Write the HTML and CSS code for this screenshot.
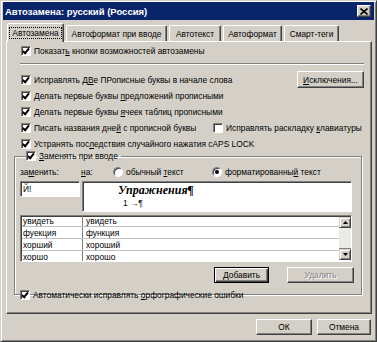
FILE: index.html
```html
<!doctype html>
<html lang="ru">
<head>
  <meta charset="UTF-8">
  <title>Автозамена: русский (Россия)</title>
  <link rel="stylesheet" href="styles.css">
</head>
<body>
  <div class="window">
    <div class="titlebar">
      <span class="title">Автозамена: русский (Россия)</span>
      <span class="close">
        <svg width="8" height="7" viewBox="0 0 8 7"><path d="M0.5 0.5 L7.5 6.5 M7.5 0.5 L0.5 6.5" stroke="#000" stroke-width="1.6"/></svg>
      </span>
    </div>

    <div class="tabs">
      <div class="tab active"><span class="focus">Автозамена</span></div>
      <div class="tab t2">Автоформат при вводе</div>
      <div class="tab t3">Автотекст</div>
      <div class="tab t4">Автоформат</div>
      <div class="tab t5">Смарт-теги</div>
    </div>

    <div class="panel">
      <div class="row first"><span class="cb on"></span><span>Показат<u>ь</u> кнопки возможностей автозамены</span></div>
      <div class="sep"></div>

      <div class="row tall">
        <span class="cb on"></span><span>Исправлять Д<u>В</u>е ПРописные буквы в начале слова</span>
        <span class="btn except"><span><u>И</u>сключения...</span></span>
      </div>
      <div class="row"><span class="cb on"></span><span>Делать первые буквы <u>п</u>редложений прописными</span></div>
      <div class="row"><span class="cb on"></span><span>Делать первые буквы <u>я</u>чеек таблиц прописными</span></div>
      <div class="row">
        <span class="half"><span class="cb on"></span><span>Писать названия дне<u>й</u> с прописной буквы</span></span>
        <span class="cb"></span><span>Исправлять раскладку <u>к</u>лавиатуры</span>
      </div>
      <div class="row"><span class="cb on"></span><span>Устранять пос<u>л</u>едствия случайного нажатия cAPS LOCK</span></div>

      <fieldset class="group">
        <legend><span class="cb on"></span><span><u>З</u>аменять при вводе</span></legend>

        <div class="labels">
          <span class="lab-from">за<u>м</u>енить:</span>
          <span class="lab-to"><u>н</u>а:</span>
          <span class="radio"></span><span class="lab-plain">обычный <u>т</u>екст</span>
          <span class="radio on"></span><span>форматированны<u>й</u> текст</span>
        </div>

        <div class="inputs">
          <div class="field from">Й!</div>
          <div class="field to">
            <div class="rich">Упражнения¶</div>
            <div class="rich-small">1 →¶</div>
          </div>
        </div>

        <div class="list">
          <div class="rows">
            <div class="item"><span class="c1">увидеть</span><span class="c2">увидеть</span></div>
            <div class="item"><span class="c1">фуекция</span><span class="c2">функция</span></div>
            <div class="item"><span class="c1">хорший</span><span class="c2">хороший</span></div>
            <div class="item"><span class="c1">хоршо</span><span class="c2">хорошо</span></div>
          </div>
          <div class="scroll">
            <span class="arrow">
              <svg width="5" height="3" viewBox="0 0 5 3"><path d="M2.5 0 L5 3 L0 3 Z" fill="#000"/></svg>
            </span>
            <span class="track"></span>
            <span class="arrow">
              <svg width="5" height="3" viewBox="0 0 5 3"><path d="M0 0 L5 0 L2.5 3 Z" fill="#000"/></svg>
            </span>
          </div>
        </div>

        <div class="actions">
          <span class="btn default"><span><u>Д</u>обавить</span></span>
          <span class="btn disabled">Удалить</span>
        </div>

        <div class="row last"><span class="cb on"></span><span>Автоматически исправлять <u>о</u>рфографические ошибки</span></div>
      </fieldset>
    </div>

    <div class="footer">
      <span class="btn ok">ОК</span>
      <span class="btn cancel">Отмена</span>
    </div>
  </div>
</body>
</html>
```

FILE: styles.css
```css
*{
  box-sizing: border-box;
}
body{
  margin: 0;
  width: 377px;
  height: 342px;
  font-family: "Liberation Sans", Arial, sans-serif;
  font-size: 8.4px;
  color: #000;
  background: #d4d0c8;
  overflow: hidden;
}
u{
  text-decoration: underline;
  text-underline-offset: 1px;
}

/* окно */
.window{
  width: 377px;
  height: 342px;
  background: #d4d0c8;
  border: 1px solid;
  border-color: #d4d0c8 #404040 #404040 #d4d0c8;
  box-shadow: inset 1px 1px #fff, inset -1px -1px #808080;
  padding: 1px 2px 0 2px;
  display: flex;
  flex-direction: column;
}
.titlebar{
  height: 18px;
  background: #0a246a;
  display: flex;
  align-items: center;
  justify-content: space-between;
  padding: 0 3px 0 2px;
}
.title{
  color: #fff;
  font-weight: bold;
  font-size: 9.5px;
}
.close{
  width: 14px;
  height: 12px;
  background: #d4d0c8;
  border: 1px solid;
  border-color: #fff #404040 #404040 #fff;
  box-shadow: inset -1px -1px #808080;
  display: flex;
  align-items: center;
  justify-content: center;
}

/* вкладки */
.tabs{
  display: flex;
  height: 19px;
  margin-top: 2px;
  padding-left: 4px;
  align-items: flex-end;
  position: relative;
  z-index: 1;
}
.tab{
  height: 16px;
  flex: none;
  border: 1px solid;
  border-bottom: none;
  border-color: #fff #404040 transparent #fff;
  box-shadow: inset -1px 0 #808080;
  border-radius: 2px 2px 0 0;
  padding: 0 4px;
  display: flex;
  align-items: center;
  justify-content: center;
  margin-right: 2px;
  white-space: nowrap;
}
.tab.active{
  width: 57px;
  height: 19px;
  margin-bottom: -1px;
  background: #d4d0c8;
  padding: 3px 2px 0 2px;
  align-items: flex-start;
}
.focus{
  border: 1px dotted #000;
  padding: 0 2px;
  line-height: 10px;
}
.t2{ width: 101px; }
.t3{ width: 52px; }
.t4{ width: 59px; }
.t5{ width: 55px; }

/* панель */
.panel{
  margin: 0 2px 0 3px;
  height: 273px;
  border: 1px solid;
  border-color: #fff #404040 #404040 #fff;
  box-shadow: inset -1px -1px #808080;
  padding: 1px 7px 0 14px;
}
.row{
  height: 16px;
  display: flex;
  align-items: center;
  white-space: nowrap;
}
.row.first{
  height: 15px;
}
.row.tall{
  height: 19px;
  margin-bottom: -1px;
}
.half{
  width: 192px;
  display: flex;
  align-items: center;
  flex: none;
}
.sep{
  height: 2px;
  margin: 5px 0 5px -1px;
  border-top: 1px solid #808080;
  border-bottom: 1px solid #fff;
}

/* флажки */
.cb{
  width: 10px;
  height: 10px;
  flex: none;
  background: #fff;
  border: 1px solid;
  border-color: #808080 #fff #fff #808080;
  box-shadow: inset 1px 1px #404040;
  margin-right: 3px;
  position: relative;
}
.cb.on::after{
  content: "";
  position: absolute;
  left: 2px;
  top: 0px;
  width: 2px;
  height: 5px;
  border: solid #000;
  border-width: 0 2px 2px 0;
  transform: rotate(40deg);
}
.radio{
  width: 10px;
  height: 10px;
  border-radius: 50%;
  background: #fff;
  border: 1px solid;
  border-color: #808080 #fff #fff #808080;
  box-shadow: inset 1px 1px #404040;
  margin-right: 3px;
  position: relative;
  flex: none;
}
.radio.on::after{
  content: "";
  position: absolute;
  left: 2px;
  top: 2px;
  width: 4px;
  height: 4px;
  border-radius: 50%;
  background: #000;
}

/* кнопки */
.btn{
  height: 16px;
  flex: none;
  display: flex;
  align-items: center;
  justify-content: center;
  background: #d4d0c8;
  border: 1px solid;
  border-color: #fff #404040 #404040 #fff;
  box-shadow: inset -1px -1px #808080;
  white-space: nowrap;
}
.except{
  margin-left: auto;
  width: 67px;
  height: 17px;
}
.btn.default{
  width: 55px;
  border: 1px solid #000;
  box-shadow: inset 1px 1px #fff, inset -1px -1px #404040, inset -2px -2px #808080;
}
.btn.disabled{
  width: 67px;
  color: #808080;
  text-shadow: 1px 1px #fff;
  margin-left: 18px;
}

/* группа */
.group{
  margin: -3px 0 0 -7px;
  padding: 0 7px 0 5px;
  width: 348px;
  height: 146px;
  border: 1px solid #808080;
  box-shadow: 1px 1px #fff, inset 1px 1px #fff;
}
.group legend{
  padding: 0 3px 0 0;
  margin-left: 6px;
  display: flex;
  align-items: center;
  height: 14px;
}
.labels{
  height: 14px;
  display: flex;
  align-items: center;
  margin-top: 2px;
  white-space: nowrap;
}
.labels span{
  flex: none;
}
.lab-from{
  width: 61px;
}
.lab-to{
  width: 32px;
}
.lab-plain{
  width: 86px;
}
.inputs{
  display: flex;
  margin-top: 2px;
  gap: 2px;
}
.field{
  background: #fff;
  border: 1px solid;
  border-color: #808080 #fff #fff #808080;
  box-shadow: inset 1px 1px #404040;
}
.field.from{
  width: 60px;
  height: 16px;
  padding: 2px 0 0 2px;
}
.field.to{
  width: 270px;
  height: 31px;
  padding: 2px 0 0 35px;
}
.rich{
  font-family: "Liberation Serif", "Times New Roman", serif;
  font-weight: bold;
  font-style: italic;
  font-size: 12px;
  line-height: 13px;
}
.rich-small{
  margin-left: 5px;
  line-height: 12px;
}
.list{
  margin-top: 3px;
  width: 332px;
  height: 47px;
  display: flex;
  background: #fff;
  border: 1px solid;
  border-color: #808080 #fff #fff #808080;
  box-shadow: inset 1px 1px #404040;
  padding: 1px 0 0 1px;
  overflow: hidden;
}
.rows{
  flex: 1;
  margin-top: -2px;
}
.item{
  height: 12px;
  display: flex;
  align-items: center;
  border-bottom: 1px solid #c0c0c0;
}
.c1{
  width: 61px;
  padding-left: 1px;
  border-right: 1px solid #808080;
  height: 100%;
  display: flex;
  align-items: center;
}
.c2{
  padding-left: 3px;
}
.scroll{
  width: 12px;
  display: flex;
  flex-direction: column;
  margin-bottom: 1px;
}
.arrow{
  height: 11px;
  background: #d4d0c8;
  border: 1px solid;
  border-color: #d4d0c8 #404040 #404040 #d4d0c8;
  box-shadow: inset 1px 1px #fff, inset -1px -1px #808080;
  display: flex;
  align-items: center;
  justify-content: center;
}
.track{
  flex: 1;
  background: #eceae6;
  border-bottom: 1px solid #808080;
}
.actions{
  display: flex;
  justify-content: flex-end;
  margin-top: 5px;
  height: 16px;
}
.row.last{
  margin-top: 5px;
  height: 14px;
}

/* низ */
.footer{
  display: flex;
  justify-content: flex-end;
  gap: 5px;
  margin-top: 5px;
  padding-right: 3px;
}
.ok{
  width: 56px;
}
.cancel{
  width: 54px;
}
```
